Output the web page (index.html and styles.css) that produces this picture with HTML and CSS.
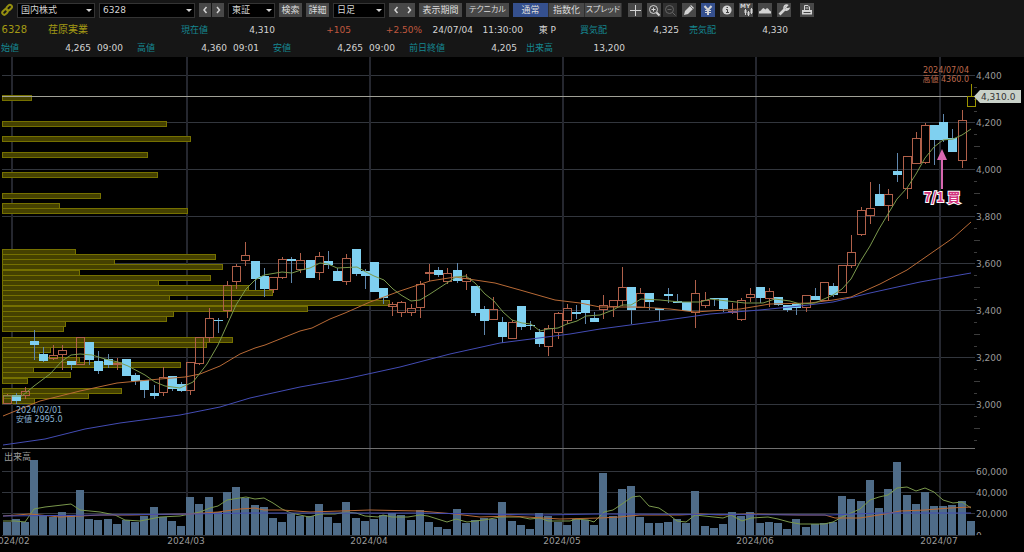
FILE: index.html
```html
<!DOCTYPE html>
<html lang="ja">
<head>
<meta charset="utf-8">
<title>6328 荏原実業</title>
<link rel="stylesheet" href="styles.css">
</head>
<body>
<header class="header">
  <form class="toolbar">
    <svg class="link-icon" viewBox="0 0 12 14" aria-hidden="true"><g fill="none" stroke="#958f10" stroke-width="2"><rect x="5.2" y="2.6" width="6" height="4" rx="2" transform="rotate(-45 8.2 4.6)"/><rect x="1" y="7" width="6" height="4" rx="2" transform="rotate(-45 4 9)"/></g></svg>
    <span class="combo combo-market"><select aria-label="市場種別"><option>国内株式</option></select></span>
    <span class="combo combo-code"><select aria-label="銘柄コード"><option>6328</option></select></span>
    <span class="group pair"><button type="button" class="btn arrow" aria-label="前の銘柄"><svg viewBox="0 0 12 14"><path d="M7.500 4 5 7l2.500 3"/></svg></button><button type="button" class="btn arrow" aria-label="次の銘柄"><svg viewBox="0 0 12 14"><path d="M5 4l2.500 3L5 10"/></svg></button></span>
    <span class="combo combo-exchange"><select aria-label="取引所"><option>東証</option></select></span>
    <button type="button" class="btn short">検索</button>
    <button type="button" class="btn short">詳細</button>
    <span class="combo combo-period"><select aria-label="足種"><option>日足</option></select></span>
    <span class="group"><button type="button" class="btn arrow" aria-label="前の足"><svg viewBox="0 0 12 14"><path d="M7.500 4 5 7l2.500 3"/></svg></button><button type="button" class="btn arrow" aria-label="次の足"><svg viewBox="0 0 12 14"><path d="M5 4l2.500 3L5 10"/></svg></button></span>
    <button type="button" class="btn long">表示期間</button>
    <button type="button" class="btn long kana">テクニカル</button>
    <span class="group modes"><button type="button" class="btn mode active">通常</button><button type="button" class="btn mode">指数化</button><button type="button" class="btn mode kana">スプレッド</button></span>
    <span class="tools">
      <button type="button" class="btn tool" aria-label="十字カーソル"><svg viewBox="0 0 14 14"><path d="M7.500 2v11M2 7.500h11"/></svg></button>
      <span class="group zooms">
        <button type="button" class="btn tool" aria-label="拡大"><svg viewBox="0 0 14 14"><circle cx="6.500" cy="6.500" r="4"/><path d="M4.500 6.500h4M6.500 4.500v4"/><path d="M9.500 9.500l3 3" stroke-width="2"/></svg></button>
        <button type="button" class="btn tool" disabled aria-label="縮小"><svg viewBox="0 0 14 14"><circle cx="6.500" cy="6.500" r="4"/><path d="M4.500 6.500h4M9.500 9.500l3 3"/></svg></button>
      </span>
      <button type="button" class="btn tool" aria-label="描画"><svg viewBox="0 0 14 14"><path class="solid" d="M2 12l1-4 6-6 3 3-6 6z"/><path d="M8 3l3 3" stroke="#484848" stroke-width=".7"/></svg></button>
      <button type="button" class="btn tool active" aria-label="円表示"><svg viewBox="0 0 14 14"><path d="M3.500 3 7 7l3.500-4M7 7v5" stroke-width="2"/><path d="M4 7.500h6M4 9.500h6"/></svg></button>
      <button type="button" class="btn tool" aria-label="情報"><svg viewBox="0 0 14 14"><circle class="solid" cx="7" cy="7" r="4.600"/><path d="M6 6.500h1.500v3M6 9.500h3M6.500 4.500h1.500" stroke="#444"/></svg></button>
      <button type="button" class="btn tool" aria-label="MYチャート"><svg viewBox="0 0 14 14"><text x="1" y="5" class="my">MY</text><path d="M6.500 6v6M9.500 8v5M12.500 5v6"/><path d="M6.500 7v3M9.500 9v3M12.500 6v4" stroke-width="2"/></svg></button>
      <button type="button" class="btn tool" aria-label="雲表示"><svg viewBox="0 0 14 14"><path class="solid" d="M1 10.500V8.500l2-1 1-1.500 1.500-1 2 1.500 1.500-1.500 1.500 1 1 1.500 1.500 1v2z"/></svg></button>
      <button type="button" class="btn tool" aria-label="設定"><svg viewBox="0 0 14 14"><path d="M2.500 11.500 8 6" stroke-width="2.600"/><path d="M10.500 2.200A2.600 2.600 0 1 0 12 5.500L9.500 6 8.500 4.500z" stroke-width="1.400"/></svg></button>
      <button type="button" class="btn tool print" aria-label="印刷"><svg viewBox="0 0 14 14"><path d="M4.500 7V2.500H8L9.500 4v3M5.500 5h3"/><path class="solid" d="M2 7h10v4.500H2z"/><path d="M3.500 9.500h7" stroke="#444"/></svg></button>
    </span>
  </form>
  <div class="quote quote-main">
    <b class="name">6328</b><b class="name company">荏原実業</b>
    <span class="label">現在値</span><span>4,310</span><span class="gain">+105</span><span class="gain">+2.50%</span><span>24/07/04</span><span>11:30:00</span><span>東 P</span><span class="label">買気配</span><span>4,325</span><span class="label">売気配</span><span>4,330</span>
  </div>
  <div class="quote quote-day">
    <span class="label">始値</span><span>4,265</span><span>09:00</span><span class="label">高値</span><span>4,360</span><span>09:01</span><span class="label">安値</span><span>4,265</span><span>09:00</span><span class="label">前日終値</span><span>4,205</span><span class="label">出来高</span><span>13,200</span>
  </div>
</header>
<main class="chart-area">
  <svg id="chart" class="chart" viewBox="0 57 1024 495" role="img" aria-label="荏原実業 日足チャート"></svg>
</main>
<script src="chart.js"></script>
</body>
</html>
```
FILE: styles.css
```css
* { box-sizing: border-box; }
body {
  margin: 0;
  background: #000;
  color: #d4d4d4;
  font-family: "DejaVu Sans", "Noto Sans CJK JP", sans-serif;
  font-size: 9px;
  overflow: hidden;
}
.header { background: #161616; height: 57px; }
.toolbar {
  display: flex;
  align-items: center;
  gap: 4px;
  height: 20px;
  padding-left: 1px;
}
.toolbar > * { flex: none; }
.link-icon { width: 12px; height: 14px; }
.combo { position: relative; display: block; height: 15px; }
.combo select {
  display: block;
  width: 100%;
  height: 15px;
  padding: 0 3px;
  border: 1px solid #343434;
  border-radius: 0;
  background: #000;
  color: #d4d4d4;
  font: inherit;
  line-height: 13px;
  appearance: none;
}
.combo::after {
  content: "";
  position: absolute;
  right: 3px;
  top: 6px;
  border: 3px solid transparent;
  border-top-color: #d4d4d4;
  border-bottom: 0;
  pointer-events: none;
}
.combo-market { width: 78px; }
.combo-code { width: 96px; }
.combo-exchange { width: 47px; }
.combo-period { width: 52px; }
.group { display: flex; }
.pair { gap: 1px; }
.btn {
  display: flex;
  align-items: center;
  justify-content: center;
  height: 14px;
  padding: 0;
  border: 0;
  background: #484848;
  color: #dcdcdc;
  font: inherit;
  line-height: 14px;
  white-space: nowrap;
}
.btn.active { background: #35508e; }
.btn svg { display: block; width: 14px; height: 14px; fill: none; stroke: #d4d4d4; }
.btn .solid { fill: #d4d4d4; stroke: none; }
.btn .my { font-size: 6px; font-weight: bold; fill: #d4d4d4; stroke: none; }
.arrow { width: 13px; }
.pair .arrow { width: 12px; }
.btn.arrow svg { width: 12px; stroke-width: 1.5; }
.short { width: 23px; }
.long { width: 43px; }
.kana { font-size: 8px; font-feature-settings: "palt"; }
.mode { width: 36px; border-right: 1px solid #303030; }
.modes .mode:last-child { width: 37px; }
.tools { display: flex; gap: 5px; margin-left: 2px; }
.tool { width: 14px; }
.tool:disabled { background: #303030; }
.tool:disabled svg { stroke: #666; }
.zooms { gap: 2px; }
.print { margin-left: 4px; }
.quote { display: grid; height: 18px; line-height: 18px; padding-left: 1px; white-space: nowrap; text-align: right; }
.quote-main { height: 20px; line-height: 20px; grid-template-columns: 26px 61px 120px 67px 76px 71px 51px 50px 33px 51px 72px 37px 72px; }
.quote-day { grid-template-columns: 18px 72px 32px 32px 72px 32px 32px 72px 32px 50px 72px 36px 72px; line-height: 17px; }
.label { color: #158791; }
.name { color: #a39a14; font-size: 10px; font-weight: normal; }
.gain { color: #c0583f; }
.chart-area { background: #000; }
.chart { display: block; width: 100%; height: auto; }
.grid { stroke: #32363d; }
.month { stroke: #25272f; stroke-width: 2; }
.tick { stroke: #3c3c3c; }
.divider { stroke: #707070; }
.current { stroke: #a0a096; }
.profile { fill: #454100; stroke: #757000; }
.volume { fill: #4f6c88; }
.down { fill: #7fd0f0; }
.down-wick { stroke: #6088ae; }
.up { fill: none; stroke: #b0604a; }
.last { fill: none; stroke: #9c9400; }
.ma { fill: none; stroke-width: 1; }
.ma-short { stroke: #7a984c; }
.ma-mid { stroke: #b86a36; }
.ma-long { stroke: #434cb4; }
.axis { fill: #999; font-size: 9px; }
.note { font-size: 8px; }
.note-low { fill: #8ab2d2; }
.note-high { fill: #bc684c; text-anchor: end; }
.tag { fill: #c8d0c8; }
.tag-text { fill: #333; font-size: 9px; }
.buy-arrow { fill: #d868b0; }
.buy { fill: #d0307c; stroke: #fff; stroke-width: 2; paint-order: stroke; font: bold 13px "Noto Sans CJK JP", sans-serif; text-anchor: middle; }
```
FILE: chart.js
```js
const svg = document.getElementById('chart');
const add = (tag, cls, attrs, text) => {
  const node = document.createElementNS('http://www.w3.org/2000/svg', tag);
  if (cls) node.setAttribute('class', cls);
  for (const key in attrs) node.setAttribute(key, attrs[key]);
  if (text !== undefined) node.textContent = text;
  svg.appendChild(node);
  return node;
};
const line = (cls, x1, y1, x2, y2) => add('line', cls, { x1, y1, x2, y2 });
const label = (cls, x, y, text) => add('text', cls, { x, y }, text);
const slotX = i => Math.round(6.6 + 9.183 * i);

// Price grid and scale
for (let i = 0; i < 8; i++) {
  const y = 75.5 + 47 * i;
  line('grid', 2, y, 975, y);
  for (let k = 1; k < 4; k++) line('tick', 974, Math.round(y + 11.75 * k) + 0.5, k === 2 ? 980 : 977, Math.round(y + 11.75 * k) + 0.5);
  label('axis', 976, y + 3, (4400 - 200 * i).toLocaleString('en-US'));
}
[471.5, 492.5, 513.5, 535.5].forEach(y => line('grid', 2, y, 975, y));
['60,000', '40,000', '20,000'].forEach((t, i) => label('axis', 976, 475 + 21 * i, t));
const defs = add('clipPath', '', { id: 'scale-end' });
const clip = document.createElementNS('http://www.w3.org/2000/svg', 'rect');
for (const [k, v] of Object.entries({ x: 970, y: 525, width: 50, height: 10 })) clip.setAttribute(k, v);
defs.appendChild(clip);
add('text', 'axis', { x: 976, y: 539, 'clip-path': 'url(#scale-end)' }, '0');
[12, 187, 370, 563, 756, 940].forEach((x, i) => {
  line('month', x, 57, x, 535);
  add('text', 'axis', { x: x - 1, y: 544, 'text-anchor': 'middle' }, '2024/0' + (i + 2));
});
line('divider', 2, 448.5, 975, 448.5);

// Volume by price: [top, right edge]
[[95,32],[121,167],[136,191],[152,148],[172,158],[193,101],[203,60],[208,188],
 [249,76],[254,216],[259,115],[264,223],[270,80],[275,211],[280,159],[285,249],[290,273],[295,170],[300,390],[306,308],[311,174],[316,167],[321,66],[326,64],
 [337,233],[342,207],[347,51],[352,40],[357,80],[362,181],[367,34],[372,71],[378,28],
 [388,122],[393,89],[398,35]].forEach(([y, r]) => add('rect', 'profile', { x: 2.5, y: y + 0.5, width: r - 3, height: 5 }));
line('current', 2, 96.5, 975, 96.5);

// Candles: direction, high, body top, body bottom, low
const candles = `u394,395,403,403 d393,395,401,404 u387,391,395,399 d330,341,345,360 d347,354,361,362 u345,355,358,360 u345,350,354,370 d361,361,365,370 u337,337,364,364 d342,342,360,365
d351,361,371,374 d354,359,365,368 u358,363,364,370 d359,359,376,376 d373,375,381,385 d380,380,390,398 d385,393,396,399 u367,377,392,396 d376,376,389,391 d382,384,391,392
u362,362,390,395 u337,337,363,365 u308,318,337,342 d318,320,321,333 u281,285,310,318 u264,266,281,289 u242,255,260,266 d261,261,279,290 d268,276,289,297 u277,277,289,293
u257,259,277,279 d257,259,261,283 u253,260,269,273 d260,260,278,278 u252,256,272,280 d251,261,265,269 d268,271,281,281 u254,258,281,285 d249,249,274,276 d269,271,276,289
d262,262,292,292 d288,288,298,304 u302,304,306,316 u301,302,312,317 u304,308,312,316 u281,284,307,318 u264,272,273,281 d267,270,275,277 u268,273,281,284 d263,270,281,283
u274,278,281,290 d286,286,313,316 d306,309,321,335 u297,309,319,319 d317,322,337,343 u320,322,338,339 d306,306,327,330 d321,325,326,330 d329,332,344,347 u325,328,346,356
u312,313,332,339 u304,308,320,324 d305,312,314,319 d300,300,313,324 d312,318,322,322 u295,305,309,319 u300,300,306,317 u267,287,300,306 d287,287,310,324 u288,293,307,307
d293,293,302,310 d308,308,310,321 d288,294,296,303 d294,301,303,303 d302,302,311,311 u280,293,312,328 u292,300,305,308 d298,298,299,306 d298,298,309,312 u303,311,312,314
u298,300,319,321 u288,294,297,302 d287,287,298,303 u288,291,298,307 d297,297,305,306 d305,305,310,312 d303,304,308,315 u295,295,307,312 d288,296,300,300 u282,282,300,300
d283,286,295,297 u265,265,292,292 u235,252,265,268 u207,210,234,236 u182,208,215,224 d184,194,206,206 u189,194,205,221 d153,171,175,182 u156,156,188,199 u132,138,163,163
u123,125,162,164 d125,125,140,165 d114,122,140,142 d129,138,152,152 u110,120,160,168 y84,96,106,106`.split(/\s+/);
candles.forEach((entry, i) => {
  const [high, top, bottom, low] = entry.slice(1).split(',').map(Number);
  const x = slotX(i);
  if (entry[0] === 'd') {
    line('down-wick', x + 0.5, high, x + 0.5, low);
    add('rect', 'down', { x: x - 4, y: top, width: 9, height: bottom - top });
  } else {
    const cls = entry[0] === 'y' ? 'last' : 'up';
    line(cls, x + 0.5, high, x + 0.5, top);
    line(cls, x + 0.5, bottom, x + 0.5, low);
    add('rect', cls, { x: x - 3.5, y: top + 0.5, width: 8, height: bottom - top });
  }
});

// Volume bar tops
[522,519,522,460,515,517,512,515,490,519,520,519,524,520,522,516,507,517,521,526,497,504,497,512,492,487,498,505,507,518,522,514,516,516,504,517,523,
 502,518,521,519,515,513,515,520,510,522,527,529,509,523,520,518,519,502,521,525,529,513,516,522,525,519,520,525,473,516,489,486,517,523,523,522,519,
 523,491,526,528,524,512,516,512,523,522,523,529,519,527,524,523,522,496,499,501,480,508,489,462,495,504,492,506,506,505,501,521]
  .forEach((y, i) => add('rect', 'volume', { x: slotX(i) - 4, y, width: 8, height: 535 - y }));

// Moving averages
[['long', '3,445 45,439 85,429 120,423 180,415 220,407 250,398 300,387 345,379 400,367 450,354 500,343 570,334 600,329 660,321 710,314 760,310 800,306 833,302 870,293 920,282 971,273'],
 ['mid', '3,416 40,401 80,391 117,383 160,379 185,377 200,374 220,366 240,354 255,348 265,345 280,339 300,331 312,328 330,319 345,313 370,302 384,297 400,291 430,281 455,277 475,280 495,283 520,290 555,300 580,303 600,307 640,307 670,309 695,312 740,309 770,304 810,303 833,300 851,297 880,284 907,270 930,254 953,238 971,222'],
 ['short', '3,396 22,396 34,386 50,374 62,361 71,355 80,354 92,355 105,359 118,362 128,366 145,375 155,382 165,386 180,388 193,382 207,364 218,345 227,325 236,305 246,289 255,280 264,275 282,272 292,273 301,270 310,268 320,263 328,264 337,268 357,267 366,272 374,276 384,280 393,289 401,295 411,301 420,300 430,294 456,277 466,276 475,283 485,294 494,301 503,312 512,320 522,323 531,324 540,331 548,329 558,328 567,324 577,321 586,316 600,315 613,310 622,305 631,305 641,299 660,300 680,302 700,302 710,299 745,303 763,303 775,299 790,301 800,304 815,303 833,295 842,289 851,279 860,262 870,246 879,229 888,214 897,199 907,188 916,174 925,158 934,147 943,140 953,139 962,135 971,129'],
 ['short', '3,521 15,521 25,522 34,509 45,507 71,504 80,510 100,512 115,515 125,520 140,521 160,517 180,516 190,514 200,512 210,508 218,506 227,500 246,497 255,499 264,498 273,503 282,509 291,513 309,517 320,514 335,514 346,512 356,513 365,516 378,517 383,515 392,517 408,517 420,515 428,516 447,522 456,519 467,522 484,520 500,517 520,517 530,519 540,518 548,521 570,521 576,519 588,520 594,522 604,512 613,510 622,504 632,497 640,496 649,506 659,508 668,514 677,521 686,522 695,515 723,518 731,515 742,521 751,518 768,517 778,519 789,522 800,524 824,524 833,522 842,517 851,513 860,509 870,500 879,497 888,495 897,488 907,487 916,491 925,488 934,492 943,500 953,503 962,502 971,508'],
 ['mid', '3,516 30,514 60,517 100,515 130,515 190,514 218,512 240,509 255,508 264,510 282,510 310,512 340,511 370,510 420,511 455,514 480,517 510,516 560,519 600,518 620,517 640,515 680,515 700,514 720,515 750,514 800,515 825,515 835,518 860,518 885,514 900,511 925,510 950,508 971,507'],
 ['long', '3,516 100,515 190,514 250,513 420,513 540,515 600,514 830,515 880,513 971,513']
].forEach(([name, points]) => add('polyline', 'ma ma-' + name, { points }));

// Annotations
label('axis', 4, 460, '出来高');
label('note note-low', 16, 413, '2024/02/01');
label('note note-low', 16, 422, '安値 2995.0');
label('note note-high', 969, 73, '2024/07/04');
label('note note-high', 969, 82, '高値 4360.0');
add('path', 'tag', { d: 'M974 96.5 980 90h41v13h-41z' });
label('tag-text', 981, 100, '4,310.0');
add('path', 'buy-arrow', { d: 'M942 149l5 11h-4v29h-2v-29h-4z' });
label('buy', 942, 202, '7/1 買');
```
